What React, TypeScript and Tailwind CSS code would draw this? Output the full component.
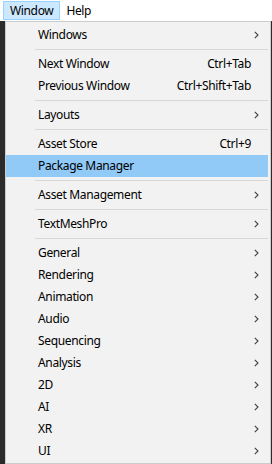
import React from "react";

type Item =
  | { kind: "sep" }
  | { kind: "item"; label: string; shortcut?: string; sub?: boolean; active?: boolean };

const items: Item[] = [
  { kind: "item", label: "Windows", sub: true },
  { kind: "sep" },
  { kind: "item", label: "Next Window", shortcut: "Ctrl+Tab" },
  { kind: "item", label: "Previous Window", shortcut: "Ctrl+Shift+Tab" },
  { kind: "sep" },
  { kind: "item", label: "Layouts", sub: true },
  { kind: "sep" },
  { kind: "item", label: "Asset Store", shortcut: "Ctrl+9" },
  { kind: "item", label: "Package Manager", active: true },
  { kind: "sep" },
  { kind: "item", label: "Asset Management", sub: true },
  { kind: "sep" },
  { kind: "item", label: "TextMeshPro", sub: true },
  { kind: "sep" },
  { kind: "item", label: "General", sub: true },
  { kind: "item", label: "Rendering", sub: true },
  { kind: "item", label: "Animation", sub: true },
  { kind: "item", label: "Audio", sub: true },
  { kind: "item", label: "Sequencing", sub: true },
  { kind: "item", label: "Analysis", sub: true },
  { kind: "item", label: "2D", sub: true },
  { kind: "item", label: "AI", sub: true },
  { kind: "item", label: "XR", sub: true },
  { kind: "item", label: "UI", sub: true },
];

function Chevron() {
  return (
    <svg width="5" height="8" viewBox="0 0 5 8" className="block">
      <path d="M0.8 0.8 L4 4 L0.8 7.2" fill="none" stroke="#404040" strokeWidth="1.1" />
    </svg>
  );
}

export default function App() {
  return (
    <div
      className="w-[272px] h-[464px] overflow-hidden bg-[#2b2b2b] text-[12px] tracking-[-0.35px] text-black"
      style={{ fontFamily: '"Noto Sans", "Open Sans", sans-serif' }}
    >
      <div className="h-[21px] bg-white flex items-start pt-px pl-[3px]">
        <div className="h-[19px] px-[6px] flex items-center border border-[#99d1ff] bg-[#cce8ff]">
          Window
        </div>
        <div className="h-[19px] px-[6px] flex items-center">Help</div>
      </div>

      <div className="ml-[5px] w-[266px] border border-[#cccccc] bg-[#f2f2f2] pt-[2px] pb-px pr-[2px]">
        {items.map((it, i) =>
          it.kind === "sep" ? (
            <div key={i} className="h-[7px] flex items-center pl-[29px]">
              <div className="h-px w-full bg-[#d7d7d7]" />
            </div>
          ) : (
            <div
              key={i}
              className={`h-[22px] flex items-center pl-[32px] pr-[9px] ${
                it.active ? "bg-[#91c9f7]" : ""
              }`}
            >
              <span className="flex-1">{it.label}</span>
              {it.shortcut && <span className="mr-[8px]">{it.shortcut}</span>}
              {it.sub && <Chevron />}
            </div>
          )
        )}
      </div>
    </div>
  );
}
